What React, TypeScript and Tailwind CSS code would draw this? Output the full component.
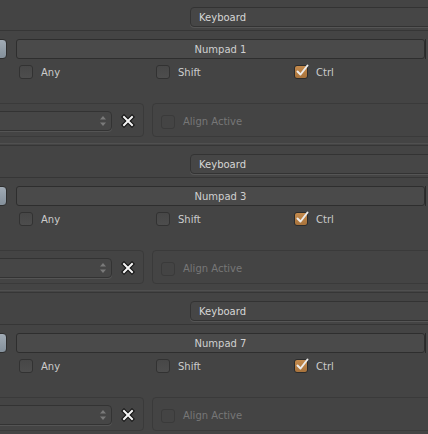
import React from 'react';

const blocos = ['Numpad 1', 'Numpad 3', 'Numpad 7'];

function CheckBox({ ativo, desativado }: { ativo?: boolean; desativado?: boolean }) {
  if (ativo) {
    return (
      <div className="relative shrink-0 w-[14px] h-[14px] rounded-[3px] border border-[#2c2c2c] bg-gradient-to-b from-[#c48a4c] to-[#a8733c]">
        <svg width="16" height="16" viewBox="0 0 16 16" className="absolute -top-[3px] -left-[1px]">
          <path d="M3.5 8.5 L6.5 11.5 L13.5 2.5" fill="none" stroke="#ececec" strokeWidth="2" strokeLinecap="round" strokeLinejoin="round" />
        </svg>
      </div>
    );
  }
  return (
    <div
      className={`shrink-0 w-[14px] h-[14px] rounded-[3px] border ${
        desativado ? 'border-[#3a3a3a] bg-[#444444]' : 'border-[#323232] bg-gradient-to-b from-[#474747] to-[#4d4d4d]'
      }`}
    />
  );
}

function Opcao({ label, ativo, largura }: { label: string; ativo?: boolean; largura: string }) {
  return (
    <div className={`shrink-0 flex items-center ${largura}`}>
      <CheckBox ativo={ativo} />
      <span className="ml-[8px] text-[10px] text-[#cccccc]">{label}</span>
    </div>
  );
}

function BlocoTecla({ tecla }: { tecla: string }) {
  return (
    <div className="h-[147px] flex flex-col">
      {/* Tipo de evento */}
      <div className="h-[31px] border-b border-[#363636] shrink-0">
        <div className="pt-[7px] pl-[190px]">
          <div className="w-[260px] h-[20px] rounded-[4px] border border-[#333333] bg-[#464646] flex items-center pl-[8px] text-[10px] text-[#d6d6d6] shadow-[0_1px_0_#555555]">
            Keyboard
          </div>
        </div>
      </div>

      {/* Tecla */}
      <div className="mt-[8px] h-[20px] flex shrink-0">
        <div className="shrink-0 -ml-[6px] w-[13px] h-[20px] rounded-r-[4px] border border-[#2e2e2e] bg-gradient-to-b from-[#a1abb5] to-[#84909b]" />
        <div className="shrink-0 ml-[9px] w-[409px] h-[20px] rounded-[3px] border border-[#2e2e2e] bg-[#4a4a4a] flex items-center justify-center text-[10px] text-[#d0d0d0]">
          {tecla}
        </div>
        <div className="shrink-0 w-[20px] h-[20px] border-l border-[#2a2a2a] bg-[#474747]" />
      </div>

      {/* Modificadores */}
      <div className="mt-[6px] h-[14px] flex items-center pl-[19px] shrink-0">
        <Opcao label="Any" largura="w-[137px]" />
        <Opcao label="Shift" largura="w-[138px]" />
        <Opcao label="Ctrl" ativo largura="w-[100px]" />
      </div>

      {/* Propriedades */}
      <div className="mt-[24px] h-[34px] flex shrink-0">
        <div className="shrink-0 -ml-[10px] w-[154px] h-[34px] rounded-[4px] border border-[#3a3a3a] pt-[7px] flex">
          <div className="shrink-0 w-[121px] h-[20px] rounded-[4px] border border-[#333333] bg-[#464646] shadow-[0_1px_0_#545454] flex items-center justify-end pr-[4px]">
            <svg width="8" height="14" viewBox="0 0 8 14">
              <path d="M1 5.5 L4 2 L7 5.5 Z" fill="#7a7a7a" />
              <path d="M1 8.5 L4 12 L7 8.5 Z" fill="#7a7a7a" />
            </svg>
          </div>
          <div className="shrink-0 ml-[10px] mt-[4px] w-[12px] h-[12px]">
            <svg width="14" height="14" viewBox="0 0 14 14" className="-ml-[1px] -mt-[1px]">
              <path d="M3 3 L11 11 M11 3 L3 11" stroke="#111111" strokeWidth="4.2" strokeLinecap="square" />
              <path d="M3 3 L11 11 M11 3 L3 11" stroke="#f4f4f4" strokeWidth="2" strokeLinecap="square" />
            </svg>
          </div>
        </div>
        <div className="shrink-0 ml-[8px] w-[290px] h-[34px] rounded-[4px] border border-[#3a3a3a] flex items-center pl-[8px] pt-[3px]">
          <CheckBox desativado />
          <span className="ml-[8px] text-[10px] text-[#777777]">Align Active</span>
        </div>
      </div>

      {/* Separador */}
      <div className="mt-[6px] h-[1px] bg-[#505050] shrink-0" />
      <div className="mt-[1px] h-[1px] bg-[#363636] shrink-0" />
    </div>
  );
}

export default function App() {
  return (
    <div
      className="w-[428px] h-[434px] overflow-hidden bg-[#444444]"
      style={{ fontFamily: '"DejaVu Sans", sans-serif' }}
    >
      {blocos.map((tecla) => (
        <BlocoTecla key={tecla} tecla={tecla} />
      ))}
    </div>
  );
}
